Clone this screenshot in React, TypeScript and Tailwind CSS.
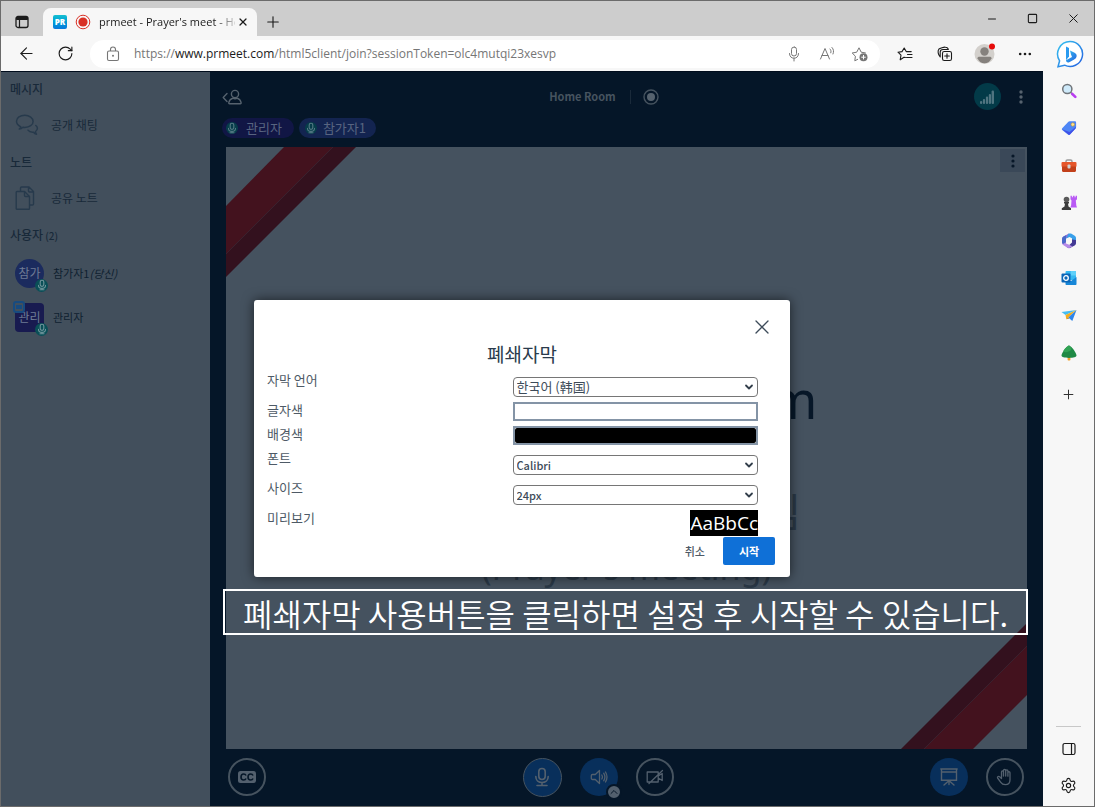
import { useState } from "react";
import type { ReactNode } from "react";
import {
  ArrowLeft,
  ChevronDown,
  ChevronUp,
  Minus,
  Plus,
  RotateCw,
  Settings,
  Square,
  X,
} from "lucide-react";

function MicIcon({ className }: { className: string }) {
  return (
    <svg viewBox="0 0 20 20" fill="none" stroke="currentColor" strokeWidth="1.6" strokeLinecap="round" className={className} aria-hidden="true">
      <rect x="6.8" y="1.5" width="6.4" height="11" rx="3.2" />
      <path d="M3.8 9.5c0 3.6 2.6 6 6.2 6s6.200-2.400 6.200-6M10 15.500v3M5 18.500h10" />
    </svg>
  );
}

function SmallMicIcon() {
  return (
    <svg viewBox="0 0 12 12" fill="none" stroke="currentColor" strokeWidth="1.100" strokeLinecap="round" className="h-3 w-3" aria-hidden="true">
      <rect x="4.200" y="1.200" width="3.600" height="6.200" rx="1.800" />
      <path d="M2.500 6.200c0 2 1.500 3.200 3.500 3.200s3.500-1.200 3.500-3.200M4 10.700h4M6 9.500v1" />
    </svg>
  );
}

function BrowserTab() {
  return (
    <div className="flex h-7 w-[214px] items-center rounded-t-lg bg-[#f7f7f7] pl-2.5 pr-1.5">
      <span className="flex h-[14px] w-[14px] shrink-0 items-center justify-center rounded-[2px] bg-gradient-to-b from-[#16bfd0] to-[#0a78dc] font-['Open_Sans',sans-serif] text-[8px] font-extrabold leading-none text-white">
        PR
      </span>
      <svg viewBox="0 0 16 16" className="ml-2 h-4 w-4 shrink-0" aria-hidden="true">
        <circle cx="8" cy="8" r="6.800" fill="none" stroke="#d93025" strokeWidth="1" />
        <circle cx="8" cy="8" r="4.600" fill="#d93025" />
      </svg>
      <span className="ml-2 min-w-0 flex-1 overflow-hidden whitespace-nowrap bg-gradient-to-r from-[#1b1b1b] from-85% to-[#1b1b1b]/20 bg-clip-text text-[11px] text-transparent">
        prmeet - Prayer's meet - Ho
      </span>
      <button aria-label="Close tab" className="flex h-4 w-4 shrink-0 items-center justify-center">
        <X className="h-3 w-3 text-[#1b1b1b]" strokeWidth={2.5} />
      </button>
    </div>
  );
}

function TitleBar() {
  return (
    <div className="flex h-[35px] items-end bg-[#cdcdcd] text-[#1b1b1b]">
      <button aria-label="Tab actions" className="flex h-7 w-[42px] items-center justify-center">
        <svg viewBox="0 0 14 14" className="h-[14px] w-[14px]" fill="none" stroke="currentColor" aria-hidden="true">
          <rect x="1" y="1.500" width="12" height="11" rx="2" strokeWidth="1.300" />
          <path d="M1.500 2.500h11v2h-11z" fill="currentColor" />
          <path d="M4.500 4.500v8" strokeWidth="1.200" />
        </svg>
      </button>
      <BrowserTab />
      <button aria-label="New tab" className="flex h-7 w-8 items-center justify-center">
        <Plus className="h-[18px] w-[18px]" strokeWidth={1.5} />
      </button>
      <div className="ml-auto flex h-full">
        <button aria-label="Minimize" className="flex w-[41px] items-center justify-center">
          <Minus className="h-3 w-3" strokeWidth={2} />
        </button>
        <button aria-label="Maximize" className="flex w-[41px] items-center justify-center">
          <Square className="h-[11px] w-[11px]" strokeWidth={2.4} />
        </button>
        <button aria-label="Close" className="flex w-[41px] items-center justify-center">
          <X className="h-[15px] w-[15px]" strokeWidth={1.6} />
        </button>
      </div>
    </div>
  );
}

function Toolbar() {
  return (
    <div className="flex h-[35px] items-center bg-[#f7f7f7] text-[#1b1b1b]">
      <button aria-label="Back" className="flex w-[50px] justify-center">
        <ArrowLeft className="h-[19px] w-[19px]" strokeWidth={1.4} />
      </button>
      <button aria-label="Refresh" className="flex w-7 justify-center">
        <RotateCw className="h-[17px] w-[17px]" strokeWidth={1.6} />
      </button>
      <div className="ml-[11px] flex h-7 min-w-0 flex-1 items-center rounded-full bg-white pl-4 pr-1 text-[#767676]">
        <svg viewBox="0 0 14 16" className="h-4 w-[14px] shrink-0" fill="none" stroke="currentColor" strokeWidth="1.100" aria-hidden="true">
          <rect x="1.500" y="5" width="11" height="9.500" rx="1.500" />
          <path d="M4.500 5V3.500a2.500 2.500 0 0 1 5 0V5" />
          <circle cx="7" cy="9.800" r="1" fill="currentColor" stroke="none" />
        </svg>
        <span className="ml-3.5 min-w-0 flex-1 truncate text-[12px]">
          https://<span className="text-[#1b1b1b]">www.prmeet.com</span>/html5client/join?sessionToken=olc4mutqi23xesvp
        </span>
        <button aria-label="Site microphone" className="flex w-[33px] justify-center">
          <svg viewBox="0 0 14 16" className="h-4 w-[14px]" fill="none" stroke="currentColor" strokeLinecap="round" aria-hidden="true">
            <rect x="4.500" y="1" width="5" height="9" rx="2.500" />
            <path d="M2.500 7.500c0 3 1.800 4.700 4.500 4.700s4.500-1.700 4.500-4.700M7 12.200V15" />
          </svg>
        </button>
        <button aria-label="Read aloud" className="flex w-[33px] justify-center">
          <svg viewBox="0 0 16 16" className="h-4 w-4" fill="none" stroke="currentColor" strokeLinecap="round" aria-hidden="true">
            <path d="M1.500 13 6 2.500 10.500 13M3 9.500h6M11 3c1 1 1.300 2.300.8 3.800M13 1.500c1.700 1.800 2 4.200 1 6.500" />
          </svg>
        </button>
        <button aria-label="Add to favorites" className="flex w-[33px] justify-center">
          <svg viewBox="0 0 18 16" className="h-4 w-[18px]" fill="none" stroke="currentColor" strokeLinejoin="round" aria-hidden="true">
            <path d="M7 13.200 3.800 14.800l.6-4.600L1.200 7l4.500-.8L8 1.800l2.200 4.400 4.600.8" />
            <circle cx="12.500" cy="11.200" r="4" fill="currentColor" stroke="none" />
            <path d="M12.500 9v4.400M10.300 11.200h4.400" stroke="#fff" />
          </svg>
        </button>
      </div>
      <button aria-label="Favorites" className="ml-[5px] flex w-10 justify-center">
        <svg viewBox="0 0 16 16" className="h-4 w-4" fill="none" stroke="currentColor" strokeWidth="1.100" strokeLinecap="round" strokeLinejoin="round" aria-hidden="true">
          <path d="M8.500 11.500 7 11.200l-3.800 2.600.8-4.600L1 6.200l4-.6L7.200 2l2 3.600h5M10.500 8.500h4.500M9.500 11.500H15" />
        </svg>
      </button>
      <button aria-label="Collections" className="flex w-10 justify-center">
        <svg viewBox="0 0 16 16" className="h-4 w-4" fill="none" stroke="currentColor" strokeWidth="1.100" strokeLinecap="round" strokeLinejoin="round" aria-hidden="true">
          <rect x="5.500" y="5.500" width="9" height="9" rx="1.800" />
          <path d="M3.200 11C1 8.500.500 5 1.800 3.200 2.800 2 7 1 8.500 1.200c1.500 0 2.500.8 2.800 2.300H6C4.500 3.500 3.200 4.500 3.200 6zM10 7.700v4.600M7.700 10h4.600" />
        </svg>
      </button>
      <button aria-label="Profile" className="flex w-10 justify-center">
        <svg viewBox="0 0 22 22" className="h-[22px] w-[22px]" aria-hidden="true">
          <circle cx="10.500" cy="11" r="10" fill="#d3d0cc" />
          <circle cx="10.500" cy="8.500" r="4.200" fill="#85817d" />
          <path d="M3.500 15.200c0-1 .8-1.500 1.800-1.500h10.400c1 0 1.800.5 1.800 1.500-1.200 3-3.800 5-7 5s-5.800-2-7-5z" fill="#85817d" />
          <circle cx="18" cy="3.600" r="3" fill="#e60b0b" />
        </svg>
      </button>
      <button aria-label="Settings and more" className="flex w-10 justify-center">
        <svg viewBox="0 0 14 4" className="h-1 w-[14px]" fill="currentColor" aria-hidden="true">
          <circle cx="2.200" cy="2" r="1.300" />
          <circle cx="7" cy="2" r="1.300" />
          <circle cx="11.800" cy="2" r="1.300" />
        </svg>
      </button>
      <button aria-label="Bing" className="flex w-[49px] justify-center">
        <svg viewBox="0 0 28 28" className="h-7 w-7" aria-hidden="true">
          <defs>
            <linearGradient id="bing" x1="0" y1="0" x2="1" y2="1">
              <stop offset="0" stopColor="#35c3f0" />
              <stop offset="1" stopColor="#2460e0" />
            </linearGradient>
          </defs>
          <path d="M14 1.500a12.500 12.500 0 1 1-5.500 23.700L2 26.800l1.600-6A12.500 12.500 0 0 1 14 1.500z" fill="#fff" stroke="url(#bing)" strokeWidth="1.500" />
          <path d="M10 6.500 13 8v8.500l-3 3.800z" fill="#2a9bf0" />
          <path d="m14 10.500 4.600 2.300c2 1 2.600 3 1.600 4.800-.5 1-1.300 1.500-2 2l-5 2.600c-1.500.7-3.200 0-3.200-1.900l6-3.400-1-2.400z" fill="url(#bing)" />
        </svg>
      </button>
    </div>
  );
}

const sideApps: { name: string; art: ReactNode }[] = [
  {
    name: "Search",
    art: (
      <>
        <circle cx="6.300" cy="6" r="4.600" fill="#cfeafa" stroke="#70757a" strokeWidth="1.500" />
        <path d="m9.800 9.500 1.700 1.500" stroke="#70757a" strokeWidth="1.600" />
        <path d="m11.300 11 3 2.900" stroke="#b83df0" strokeWidth="2.600" strokeLinecap="round" />
      </>
    ),
  },
  {
    name: "Shopping",
    art: (
      <>
        <path d="M8.600 1.200h5.200c.8 0 1.300.5 1.300 1.300v4.700c0 .5-.2.900-.5 1.200l-5.700 6.200c-.5.500-1.200.5-1.700.1L1.200 10c-.5-.5-.5-1.200 0-1.700l6.200-6.600c.3-.3.700-.5 1.200-.5z" fill="#4e86f5" />
        <path d="m1 9.200 6.500 5.400c.5.500 1 .4 1.500-.1l5.700-6.200.4-1.500L8.500 12z" fill="#4150e8" />
        <circle cx="11.800" cy="4.500" r="1.700" fill="#ffe38a" stroke="#c99b2b" strokeWidth=".6" />
      </>
    ),
  },
  {
    name: "Tools",
    art: (
      <>
        <path d="M5 5V3.500C5 2.500 5.600 2 6.500 2h3c1 0 1.500.5 1.500 1.500V5" fill="none" stroke="#9a9a9a" strokeWidth="1.500" />
        <rect x=".5" y="4" width="15" height="5" rx="1" fill="#e5562a" />
        <path d="M1 8.500h14v4.300c0 .7-.5 1.200-1.200 1.200H2.200C1.500 14 1 13.500 1 12.800z" fill="#c2401a" />
        <rect x="6.500" y="6.500" width="3" height="4" rx="1" fill="#d0d0d0" />
      </>
    ),
  },
  {
    name: "Games",
    art: (
      <>
        <path d="M9.500.8h1.400v1.400h1V.8h1.700v1.400h1V.8H16v3.400l-1.200 1.200.5 5 .7 2h-6.700l.8-2 .4-5-1-1.200z" fill="#b95af5" />
        <circle cx="5.500" cy="4.600" r="2.800" fill="#5a5a5a" />
        <path d="M3 7h5v1.400H7l.5 3.100 2.500 1.800V15H.8v-1.700l2.700-1.800L4 8.400H3z" fill="#3c3c3c" />
      </>
    ),
  },
  {
    name: "Microsoft 365",
    art: (
      <>
        <path d="M7.800.6 2.500 3.600C1.500 4.300 1 5 1 6.200V10l4-1.400V5.500l5-3z" fill="#8a6fd8" />
        <path d="M7.500.8c1-.5 2-.5 3 0l3.200 2c.8.500 1.300 1.300 1.300 2.300V9l-4-1.500V5.300L8.500 4 5 5.500z" fill="#39a0ea" />
        <path d="M15 7v3c0 1-.5 1.900-1.400 2.400l-4.100 2.400c-1 .5-2 .5-3 0l-1-3 2.800.2L11 9.500v-3z" fill="#433a94" />
        <path d="M1 9.500c0 1.300.5 2.200 1.500 2.800l3.500 2.300c1 .6 2 .6 3 .2l2.500-1.600L5 10.500V5.800L1 8z" fill="#b58ae8" />
        <path d="M1 6.500c0-1.300.5-2.200 1.500-2.900L5 2.200v7L2 11c-.7-.5-1-1-1-2z" fill="#4968c8" />
      </>
    ),
  },
  {
    name: "Outlook",
    art: (
      <>
        <rect x="4.500" y="1" width="10.500" height="9" rx="1" fill="#35b8f1" />
        <path d="M9.700 1H14c.6 0 1 .4 1 1v3.500H9.700z" fill="#5fd0fa" />
        <path d="M4.500 8 10 11l5.500-4v7c0 .6-.4 1-1 1h-9c-.6 0-1-.4-1-1z" fill="#1787d8" />
        <rect x=".5" y="3.500" width="9" height="9" rx="1" fill="#0a66b8" />
        <circle cx="5" cy="8" r="2.300" fill="none" stroke="#fff" strokeWidth="1.300" />
      </>
    ),
  },
  {
    name: "Drop",
    art: (
      <>
        <path d="M15.500 2 .5 4l4 3z" fill="#45bdf2" />
        <path d="M15.500 2 4.500 7l.8 4.200z" fill="#f5ac1c" />
        <path d="M15.500 2 5.300 11.200l2-1.700 4 3.500z" fill="#2f86ea" />
        <path d="m5.300 11.200 2-1.700 1 1z" fill="#b97708" />
      </>
    ),
  },
  {
    name: "Tree",
    art: (
      <>
        <rect x="6.600" y="11" width="2.800" height="4.500" rx=".8" fill="#f0a02c" />
        <path d="M8 .5c-1.800.6-5 4-5.600 5.800C1.200 8 .5 9.600.5 10.600.5 12 3.500 13 8 13s7.500-1 7.500-2.400c0-1-.7-2.600-1.900-4.300C13 4.500 9.800 1.100 8 .5z" fill="#1f8a45" />
        <path d="M8 .5c-1.800.6-5 4-5.600 5.800C4 8 8 7 10 5S8.500 1 8 .5z" fill="#31a354" />
      </>
    ),
  },
];

function BrowserSidebar() {
  return (
    <aside className="flex w-[51px] shrink-0 flex-col bg-[#f7f7f7] pt-px text-[#333]">
      <div className="grid h-[300px] grid-rows-8">
        {sideApps.map((app) => (
          <button key={app.name} aria-label={app.name} className="flex items-center justify-center">
            <svg viewBox="0 0 16 16" className="h-4 w-4" aria-hidden="true">
              {app.art}
            </svg>
          </button>
        ))}
      </div>
      <button aria-label="Customize sidebar" className="flex h-11 items-center justify-center">
        <Plus className="h-[15px] w-[15px]" strokeWidth={1.6} />
      </button>
      <div className="mt-auto flex flex-col items-center pb-0.5">
        <div className="mb-[3px] h-px w-[25px] bg-[#c8c8c8]" />
        <button aria-label="Hide sidebar" className="flex h-[37px] items-center">
          <svg viewBox="0 0 14 14" className="h-[14px] w-[14px]" fill="none" stroke="#1b1b1b" strokeWidth="1.200" aria-hidden="true">
            <rect x="1" y="1.500" width="12" height="11" rx="1.800" />
            <path d="M9.500 1.500v11" />
          </svg>
        </button>
        <button aria-label="Settings" className="flex h-[37px] items-center">
          <Settings className="h-[17px] w-[17px] text-[#1b1b1b]" strokeWidth={1.6} />
        </button>
      </div>
    </aside>
  );
}

function UserRow({ initials, name, you, moderator }: { initials: string; name: string; you?: string; moderator?: boolean }) {
  return (
    <li className="flex h-11 items-center pl-3.5">
      <div
        className={
          moderator
            ? "relative flex h-[29px] w-[29px] items-center justify-center rounded-[4px] bg-[#181b50]"
            : "relative flex h-[29px] w-[29px] items-center justify-center rounded-full bg-[#1b2b5e]"
        }
      >
        <span className="text-[12px] leading-none text-[#6f7b95]">{initials}</span>
        {moderator && (
          <span className="absolute -left-0.5 -top-0.5 flex h-3 w-3 items-center justify-center rounded-[3px] border-2 border-[#174b80] bg-[#424f5c]">
            <span className="h-1 w-1.5 bg-[#174b80]" />
          </span>
        )}
        <span className="absolute -bottom-1 -right-1 flex h-[13px] w-[13px] items-center justify-center rounded-full bg-[#0a4f57] text-[#6f959b]">
          <SmallMicIcon />
        </span>
      </div>
      <span className="ml-[9px] text-[11px] text-[#0f1f30]">
        {name}
        {you && <em>{you}</em>}
      </span>
    </li>
  );
}

function UserPanel() {
  return (
    <nav className="w-[209px] shrink-0 bg-[#424f5c] pt-1.5 text-[#182939]">
      <h2 className="flex h-[22px] items-center pl-[9px] text-[12px] font-medium">메시지</h2>
      <a href="#chat" className="flex h-[50px] items-center pl-3.5 text-[12px]">
        <svg viewBox="0 0 24 22" className="h-[22px] w-6 text-[#273a4c]" fill="none" stroke="currentColor" strokeWidth="1.500" strokeLinecap="round" strokeLinejoin="round" aria-hidden="true">
          <path d="M5.800 12.800C3.200 11.500 1.500 9.600 1.500 7.300c0-3.600 3.700-6 8.300-6s8.300 2.600 8.300 6.100-3.700 6-8.300 6c-.7 0-1.300 0-1.900-.2-1 1-2.300 1.700-3.600 1.900.8-.7 1.400-1.500 1.500-2.300z" />
          <path d="M20.800 11.500c1 .8 1.600 1.800 1.600 2.800 0 1.400-.7 2.400-1.900 3.200 0 1.200.4 2 1 2.700-1.200-.2-2.200-.8-3-1.900-2.600.2-4.500-.5-5.500-2.100" />
        </svg>
        <span className="ml-3">공개 채팅</span>
      </a>
      <h2 className="flex h-6 items-center pl-[9px] text-[12px] font-medium">노트</h2>
      <a href="#notes" className="flex h-12 items-center pl-3.5 text-[12px]">
        <svg viewBox="0 0 24 24" className="h-6 w-6 text-[#273a4c]" fill="none" stroke="currentColor" strokeWidth="1.400" strokeLinejoin="round" aria-hidden="true">
          <path d="M2 5.500h7.500l5 5v12c0 .5-.3.800-.8.800H2c-.5 0-.8-.3-.8-.8V6.300c0-.5.300-.8.800-.8z" />
          <path d="M9.500 5.500v4c0 .6.400 1 1 1h4M5.500 5V2c0-.6.400-1 1-1H14l4.500 4.500V18c0 .6-.4 1-1 1h-2.800M13.500 1v4c0 .6.400 1 1 1h4" />
        </svg>
        <span className="ml-3">공유 노트</span>
      </a>
      <h2 className="flex h-[26px] items-center gap-0.5 pl-[9px] text-[12px] font-medium">
        사용자 <span className="text-[10px]">(2)</span>
      </h2>
      <ul className="mt-[3px]">
        <UserRow initials="참가" name="참가자1" you="(당신)" />
        <UserRow initials="관리" name="관리자" moderator />
      </ul>
    </nav>
  );
}

function TalkingPill({ name, moderator }: { name: string; moderator?: boolean }) {
  return (
    <button
      className={
        moderator
          ? "flex h-5 items-center gap-2 rounded-full bg-[#111645] pl-1 pr-3 text-[13px] text-[#586480]"
          : "flex h-5 items-center gap-1.5 rounded-full bg-[#132450] pl-1.5 pr-2.5 text-[13px] text-[#586480]"
      }
    >
      <span className="flex h-3 w-3 items-center justify-center rounded-full bg-[#063c4a] text-[#547a84]">
        <SmallMicIcon />
      </span>
      {name}
    </button>
  );
}

function MeetingHeader() {
  return (
    <header className="flex h-[46px] items-center justify-between pb-px pl-3 pr-[18px] pt-1 text-[#46535f]">
      <button aria-label="Toggle user list">
        <svg viewBox="0 0 20 16" className="h-4 w-5" fill="none" stroke="#56626e" strokeWidth="1.400" strokeLinecap="round" strokeLinejoin="round" aria-hidden="true">
          <path d="M5 4.500 1.200 8.500 5 12.500" />
          <circle cx="13" cy="5" r="3.600" />
          <path d="M7.500 14.700c-.7 0-.8-.3-.7-1 .5-2.500 2-4 4-4.500 1.500.8 3 .8 4.500 0 2 .5 3.300 2 3.800 4.500.1.700 0 1-.8 1z" />
        </svg>
      </button>
      <div className="mr-2 flex items-center">
        <h1 className="text-[11px] font-bold">Home Room</h1>
        <span className="ml-3.5 h-3.5 w-px bg-[#1a2a3a]" />
        <button aria-label="Recording" className="ml-3">
          <svg viewBox="0 0 16 16" className="h-4 w-4" aria-hidden="true">
            <circle cx="8" cy="8" r="7" fill="none" stroke="#46535f" strokeWidth="1.400" />
            <circle cx="8" cy="8" r="4" fill="#56626e" />
          </svg>
        </button>
      </div>
      <div className="flex items-center gap-4">
        <button aria-label="Connection status" className="flex h-[27px] w-[27px] items-center justify-center rounded-full bg-[#033a48]">
          <svg viewBox="0 0 14 14" className="h-[14px] w-[14px]" fill="#4f7480" aria-hidden="true">
            <rect x="0" y="11" width="2.200" height="3" rx="1" />
            <rect x="2.900" y="9" width="2.200" height="5" rx="1" />
            <rect x="5.900" y="6.500" width="2.200" height="7.500" rx="1" />
            <rect x="8.800" y="4" width="2.200" height="10" rx="1" />
            <rect x="11.600" y="0.500" width="2.400" height="13.500" rx="1" />
          </svg>
        </button>
        <button aria-label="Options" className="flex w-2 justify-center">
          <svg viewBox="0 0 4 14" className="h-[14px] w-1" fill="#56626e" aria-hidden="true">
            <circle cx="2" cy="2" r="1.700" />
            <circle cx="2" cy="7" r="1.700" />
            <circle cx="2" cy="12" r="1.700" />
          </svg>
        </button>
      </div>
    </header>
  );
}

function Slide() {
  return (
    <section className="relative mx-4 flex flex-1 flex-col items-center justify-center overflow-hidden bg-[#45525f] pt-[60px]">
      <svg viewBox="0 0 130 130" className="absolute left-0 top-0 h-[130px] w-[130px]" aria-hidden="true">
        <path d="M58 0h49L0 107V59z" fill="#43121e" />
        <path d="M107 0h23L0 130v-23z" fill="#33111e" />
      </svg>
      <svg viewBox="0 0 126 126" className="absolute bottom-0 right-0 h-[126px] w-[126px]" aria-hidden="true">
        <path d="M72 126H23L126 23v49z" fill="#43121e" />
        <path d="M23 126H0L126 0v23z" fill="#33111e" />
      </svg>
      <button aria-label="Presentation options" className="absolute right-0.5 top-0.5 flex h-[23px] w-[25px] items-center justify-center bg-[#3a4858]">
        <svg viewBox="0 0 4 14" className="h-[14px] w-1" fill="#071728" aria-hidden="true">
          <circle cx="2" cy="2" r="1.600" />
          <circle cx="2" cy="7" r="1.600" />
          <circle cx="2" cy="12" r="1.600" />
        </svg>
      </button>
      <p className="font-['Noto_Sans',sans-serif] text-[52px] leading-[76px] text-[#071728]">Welcome Room</p>
      <p className="mt-[45px] text-[40px] leading-[56px] text-[#2a3846]">프레이어스 미팅 모임</p>
      <p className="font-['Noto_Sans',sans-serif] text-[34px] leading-[58px] text-[#2a3846]">(Prayer's meeting)</p>
    </section>
  );
}

function ActionsBar() {
  return (
    <footer className="flex h-[57px] items-center justify-between pb-px pl-[18px] pr-[19px] text-[#53606e]">
      <button aria-label="Closed captions" className="flex h-[38px] w-[38px] items-center justify-center rounded-full border-2 border-[#46535f]">
        <svg viewBox="0 0 18 12" className="h-3 w-[18px]" aria-hidden="true">
          <rect width="18" height="12" rx="2.500" fill="#53606e" />
          <path d="M8 4.600C7.600 3.500 6.800 3 5.700 3 4 3 3 4.200 3 6s1 3 2.700 3c1.100 0 1.900-.5 2.300-1.600M15 4.600C14.600 3.500 13.800 3 12.700 3 11 3 10 4.200 10 6s1 3 2.700 3c1.100 0 1.900-.5 2.300-1.600" fill="none" stroke="#051628" strokeWidth="1.600" />
        </svg>
      </button>
      <div className="flex items-center gap-[18px]">
        <button aria-label="Mute" className="flex h-[39px] w-[39px] items-center justify-center rounded-full border border-[#46535f] bg-[#082f5b]">
          <MicIcon className="h-5 w-5" />
        </button>
        <div className="relative">
          <button aria-label="Leave audio" className="flex h-[38px] w-[38px] items-center justify-center rounded-full bg-[#082f5b]">
            <svg viewBox="0 0 18 16" className="h-4 w-[18px]" fill="none" stroke="currentColor" strokeWidth="1.300" strokeLinecap="round" strokeLinejoin="round" aria-hidden="true">
              <path d="M2.500 5.500h2.800L9.500 1.500v13l-4.200-4H2.500c-.7 0-1.200-.5-1.200-1.200V6.700c0-.7.500-1.200 1.200-1.200zM11.800 6c.7 1.200.7 2.800 0 4M13.700 4.200c1.400 2.200 1.400 5.400 0 7.600M15.500 3c1.800 3 1.800 7 0 10" />
            </svg>
          </button>
          <button aria-label="Change audio device" className="absolute -bottom-1 -right-1 flex h-4 w-4 items-center justify-center rounded-full border-2 border-[#051628] bg-[#53606e] text-[#051628]">
            <ChevronUp className="h-3 w-3 shrink-0" strokeWidth={2} />
          </button>
        </div>
        <button aria-label="Share webcam" className="flex h-[38px] w-[38px] items-center justify-center rounded-full border-2 border-[#46535f]">
          <svg viewBox="0 0 18 16" className="h-4 w-[18px]" fill="none" stroke="currentColor" strokeWidth="1.300" strokeLinejoin="round" strokeLinecap="round" aria-hidden="true">
            <path d="M1.200 3h11v10h-11zM12.200 7l4-2.500v7L12.200 9M3 14.500 16.500 1.500" />
          </svg>
        </button>
      </div>
      <div className="flex items-center gap-[18px]">
        <button aria-label="Presentation" className="flex h-[38px] w-[38px] items-center justify-center rounded-full bg-[#082f5b]">
          <svg viewBox="0 0 20 20" className="h-5 w-5" fill="none" stroke="currentColor" strokeWidth="1.400" strokeLinecap="round" aria-hidden="true">
            <path d="M1.800 2h16.400M2.500 2.500v10.800h15V2.500M2.500 5h15M10 13.500v4M9 14.500l-4 3.500M11 14.500l4 3.500" />
          </svg>
        </button>
        <button aria-label="Raise hand" className="flex h-[38px] w-[38px] items-center justify-center rounded-full border-2 border-[#46535f]">
          <svg viewBox="0 0 18 18" className="h-[18px] w-[18px]" fill="none" stroke="currentColor" strokeWidth="1.300" strokeLinecap="round" strokeLinejoin="round" aria-hidden="true">
            <path d="M5.500 10.500V4c0-1.400 2-1.400 2 0v4V2.500c0-1.500 2.200-1.500 2.200 0V8 2.900c0-1.400 2.200-1.400 2.200 0v5.300V4.700c0-1.300 2.100-1.300 2.100 0v7c0 3-1.700 5-4.700 5-2.200 0-3.500-.8-4.500-2.300L1.600 10c-.6-1.300 1-2.200 2-1.200z" />
          </svg>
        </button>
      </div>
    </footer>
  );
}

function SelectRow({ id, label, options, large }: { id: string; label: string; options: string[]; large?: boolean }) {
  return (
    <div className="grid grid-cols-2 items-start">
      <label htmlFor={id} className="text-[13px] leading-4">
        {label}
      </label>
      <div className="relative py-[5px]">
        <select
          id={id}
          className={
            large
              ? "block h-5 w-full appearance-none rounded-[4px] border border-[#767676] bg-white pl-[3px] pr-6 text-[13px] leading-4 text-[#3d4b59]"
              : "block h-5 w-full appearance-none rounded-[4px] border border-[#767676] bg-white pl-[3px] pr-6 text-[11px] font-medium leading-4 text-[#3d4b59]"
          }
        >
          {options.map((option) => (
            <option key={option}>{option}</option>
          ))}
        </select>
        <ChevronDown className="pointer-events-none absolute right-[3px] top-[9px] h-3 w-3 text-[#333f4b]" strokeWidth={3.6} />
      </div>
    </div>
  );
}

function ColorRow({ id, label, initial }: { id: string; label: string; initial: string }) {
  const [value, setValue] = useState(initial);
  return (
    <div className="grid h-6 grid-cols-2 items-start">
      <label htmlFor={id} className="text-[13px] leading-4">
        {label}
      </label>
      <input
        id={id}
        type="color"
        value={value}
        onChange={(event) => setValue(event.target.value)}
        className="block h-[19px] w-full appearance-none border-2 border-[#8494a6] bg-white p-0 [&::-webkit-color-swatch-wrapper]:p-0 [&::-webkit-color-swatch]:rounded-[2px] [&::-webkit-color-swatch]:border-0"
      />
    </div>
  );
}

function CaptionsDialog() {
  return (
    <div className="absolute inset-0 z-10 flex items-center justify-center pb-px">
      <div role="dialog" aria-modal="true" aria-labelledby="captions-title" className="w-full max-w-[536px] rounded-[3px] bg-white pb-3 pt-[19px] text-[#4e5a66] shadow-[0_0_12px_rgba(0,0,0,0.6)]">
        <div className="flex justify-end pr-5">
          <button aria-label="닫기" className="flex h-4 w-4 items-center justify-center">
            <svg viewBox="0 0 14 14" className="h-[14px] w-[14px]" fill="none" stroke="#3d4b59" strokeWidth="1.300" strokeLinecap="round" aria-hidden="true">
              <path d="m1 1 12 12M13 1 1 13" />
            </svg>
          </button>
        </div>
        <h2 id="captions-title" className="mt-[7px] text-center text-[19px] leading-6 text-[#2a3b4c]">
          폐쇄자막
        </h2>
        <div className="mt-1.5 pl-[13px] pr-8">
          <SelectRow id="language" label="자막 언어" options={["한국어 (韩国)", "English"]} large />
          <ColorRow id="font-color" label="글자색" initial="#ffffff" />
          <ColorRow id="background-color" label="배경색" initial="#000000" />
          <SelectRow id="font-family" label="폰트" options={["Calibri", "Arial"]} />
          <SelectRow id="font-size" label="사이즈" options={["24px", "32px"]} />
          <div className="flex items-start justify-between">
            <span className="text-[13px] leading-4">미리보기</span>
            <span className="bg-black font-['Open_Sans',sans-serif] text-[19px] leading-[26px] text-white">AaBbCc</span>
          </div>
        </div>
        <div className="mt-px flex justify-end pr-[15px]">
          <button className="px-[18px] text-[11px] font-medium">취소</button>
          <button className="h-7 w-[52px] rounded-[2px] bg-[#0f70d7] text-[11px] font-bold text-white">시작</button>
        </div>
      </div>
    </div>
  );
}

function Meeting() {
  return (
    <div className="relative flex min-w-0 flex-1 border-t border-[#000c1c] bg-[#051628] font-['Noto_Sans_CJK_KR',sans-serif]">
      <UserPanel />
      <main className="relative flex min-w-0 flex-1 flex-col">
        <MeetingHeader />
        <div className="flex gap-[5px] pl-3">
          <TalkingPill name="관리자" moderator />
          <TalkingPill name="참가자1" />
        </div>
        <div className="flex flex-1 flex-col pt-[9px]">
          <Slide />
        </div>
        <ActionsBar />
        <p className="absolute bottom-[171px] left-[13px] right-[15px] flex h-[46px] items-center justify-center whitespace-nowrap border-2 border-white pt-0.5 text-[32px] font-[350] leading-10 text-white">
          폐쇄자막 사용버튼을 클릭하면 설정 후 시작할 수 있습니다.
        </p>
      </main>
      <CaptionsDialog />
    </div>
  );
}

export default function App() {
  return (
    <div className="flex min-h-screen flex-col border border-[#6b6b6b] font-['Open_Sans',sans-serif]">
      <TitleBar />
      <Toolbar />
      <div className="flex flex-1">
        <Meeting />
        <BrowserSidebar />
      </div>
    </div>
  );
}
